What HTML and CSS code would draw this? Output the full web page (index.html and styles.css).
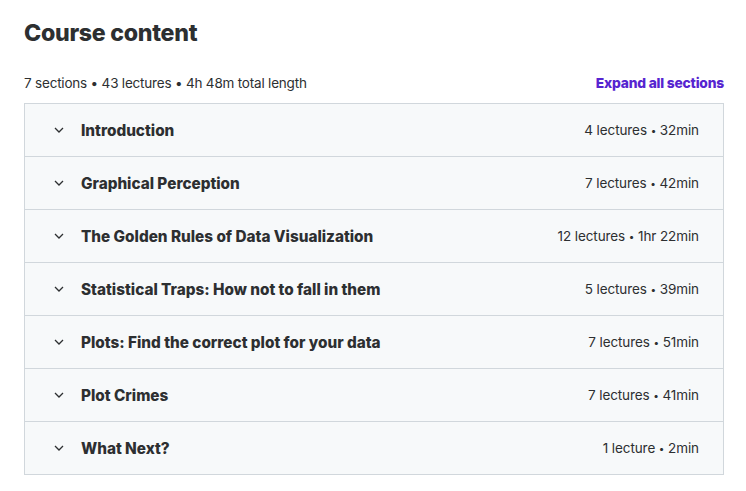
FILE: index.html
```html
<!DOCTYPE html>
<html>
<head>
<meta charset="utf-8">
<link rel="stylesheet" href="styles.css">
</head>
<body>
<div class="page">
  <h2 class="title">Course content</h2>
  <div class="meta-row">
    <span class="meta">7 sections • 43 lectures • 4h 48m total length</span>
    <a class="expand" href="#">Expand all sections</a>
  </div>
  <div class="sections">
    <div class="section"><span class="chev"><svg viewBox="0 0 10 6" width="10" height="6"><path d="M1 1 L5 5 L9 1" fill="none" stroke="#2d2f31" stroke-width="1.3"/></svg></span><span class="name">Introduction</span><span class="info">4 lectures <i>•</i> 32min</span></div>
    <div class="section"><span class="chev"><svg viewBox="0 0 10 6" width="10" height="6"><path d="M1 1 L5 5 L9 1" fill="none" stroke="#2d2f31" stroke-width="1.3"/></svg></span><span class="name">Graphical Perception</span><span class="info">7 lectures <i>•</i> 42min</span></div>
    <div class="section"><span class="chev"><svg viewBox="0 0 10 6" width="10" height="6"><path d="M1 1 L5 5 L9 1" fill="none" stroke="#2d2f31" stroke-width="1.3"/></svg></span><span class="name">The Golden Rules of Data Visualization</span><span class="info">12 lectures <i>•</i> 1hr 22min</span></div>
    <div class="section"><span class="chev"><svg viewBox="0 0 10 6" width="10" height="6"><path d="M1 1 L5 5 L9 1" fill="none" stroke="#2d2f31" stroke-width="1.3"/></svg></span><span class="name">Statistical Traps: How not to fall in them</span><span class="info">5 lectures <i>•</i> 39min</span></div>
    <div class="section"><span class="chev"><svg viewBox="0 0 10 6" width="10" height="6"><path d="M1 1 L5 5 L9 1" fill="none" stroke="#2d2f31" stroke-width="1.3"/></svg></span><span class="name">Plots: Find the correct plot for your data</span><span class="info">7 lectures <i>•</i> 51min</span></div>
    <div class="section"><span class="chev"><svg viewBox="0 0 10 6" width="10" height="6"><path d="M1 1 L5 5 L9 1" fill="none" stroke="#2d2f31" stroke-width="1.3"/></svg></span><span class="name">Plot Crimes</span><span class="info">7 lectures <i>•</i> 41min</span></div>
    <div class="section"><span class="chev"><svg viewBox="0 0 10 6" width="10" height="6"><path d="M1 1 L5 5 L9 1" fill="none" stroke="#2d2f31" stroke-width="1.3"/></svg></span><span class="name">What Next?</span><span class="info">1 lecture <i>•</i> 2min</span></div>
  </div>
</div>
</body>
</html>
```
FILE: styles.css
```css
html, body {
  margin: 0;
  padding: 0;
  background: #ffffff;
}
body {
  font-family: Inter, "Liberation Sans", sans-serif;
  color: #2d2f31;
}
.page {
  width: 700px;
  margin-left: 24px;
  padding-top: 17px;
}
.title {
  margin: 0;
  font-size: 23.2px;
  line-height: 32px;
  font-weight: 800;
  letter-spacing: -0.3px;
}
.meta-row {
  display: flex;
  justify-content: space-between;
  align-items: center;
  margin-top: 24px;
  margin-bottom: 10px;
  height: 20px;
}
.meta {
  font-size: 13.5px;
  line-height: 20px;
  letter-spacing: -0.2px;
}
.expand {
  color: #5624d0;
  font-weight: 800;
  font-size: 13.8px;
  text-decoration: none;
  letter-spacing: -0.2px;
}
.sections {
  border: 1px solid #d1d7dc;
  background: #f7f9fa;
}
.section {
  display: flex;
  align-items: center;
  height: 52px;
  padding: 0 24px 0 28px;
  border-top: 1px solid #d1d7dc;
}
.section:first-child {
  border-top: none;
}
.chev {
  display: flex;
  width: 12px;
  margin-right: 16px;
}
.chev svg {
  margin-left: 1px;
}
.name {
  flex: 1;
  font-weight: 800;
  font-size: 15.3px;
  letter-spacing: 0;
}
.info {
  font-size: 13.5px;
  letter-spacing: -0.1px;
}
.info i {
  font-style: normal;
  font-size: 10px;
  vertical-align: 1px;
}
```
